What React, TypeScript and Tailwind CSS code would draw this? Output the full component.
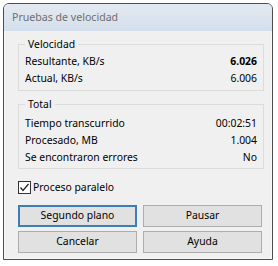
import React from "react";

function Row({ label, value, bold }: { label: string; value: string; bold?: boolean }) {
  return (
    <div className="flex h-[17px] items-center justify-between">
      <span>{label}</span>
      <span className={bold ? "font-bold" : ""}>{value}</span>
    </div>
  );
}

function Group({ title, children, className }: { title: string; children: React.ReactNode; className?: string }) {
  return (
    <div className={"relative border border-[#dcdcdc] px-[6px] " + (className ?? "")}>
      <span className="absolute left-[6px] top-[-9px] h-[17px] bg-[#f0f0f0] px-[3px] leading-[17px]">{title}</span>
      {children}
    </div>
  );
}

function Btn({ label, focused }: { label: string; focused?: boolean }) {
  return (
    <button
      className={
        "flex h-[22px] w-[119px] items-center justify-center bg-[#e1e1e1] " +
        (focused ? "border-2 border-[#3c7fb8]" : "border border-[#adadad]")
      }
    >
      {label}
    </button>
  );
}

export default function App() {
  return (
    <div
      className="h-[266px] w-[278px] bg-white pl-[3px] pt-[3px] text-[10.4px] text-black"
      style={{ fontFamily: '"Noto Sans", "Open Sans", sans-serif' }}
    >
      <div className="flex h-[257px] w-[270px] flex-col overflow-hidden rounded-t-[6px] border border-[#4d4d4d] bg-[#f0f0f0] shadow-[inset_0_0_0_1px_rgba(255,255,255,0.5)]">
        <div className="flex h-[27px] items-center bg-gradient-to-b from-[#e4e9f0] to-[#d3dfec] pl-[8px] pt-[1px] text-[10.6px] text-[#6e6e6e]">
          Pruebas de velocidad
        </div>
        <div className="flex flex-1 flex-col pl-[14px] pr-[8px] pt-[13px]">
          <Group title="Velocidad" className="pb-[3px] pt-[8px]">
            <Row label="Resultante, KB/s" value="6.026" bold />
            <Row label="Actual, KB/s" value="6.006" />
          </Group>
          <Group title="Total" className="mt-[13px] pb-[2px] pt-[10px]">
            <Row label="Tiempo transcurrido" value="00:02:51" />
            <Row label="Procesado, MB" value="1.004" />
            <Row label="Se encontraron errores" value="No" />
          </Group>
          <div className="mt-[12px] flex h-[13px] items-center">
            <div className="flex h-[13px] w-[13px] items-center justify-center border border-[#333] bg-white">
              <svg width="11" height="11" viewBox="0 0 11 11">
                <path d="M1.5 5.5 L4 8.5 L9.5 2" fill="none" stroke="#222" strokeWidth="1.2" />
              </svg>
            </div>
            <span className="ml-[2px]">Proceso paralelo</span>
          </div>
          <div className="mt-[11px] flex gap-[6px]">
            <Btn label="Segundo plano" focused />
            <Btn label="Pausar" />
          </div>
          <div className="mt-[4px] flex gap-[6px]">
            <Btn label="Cancelar" />
            <Btn label="Ayuda" />
          </div>
        </div>
      </div>
    </div>
  );
}
